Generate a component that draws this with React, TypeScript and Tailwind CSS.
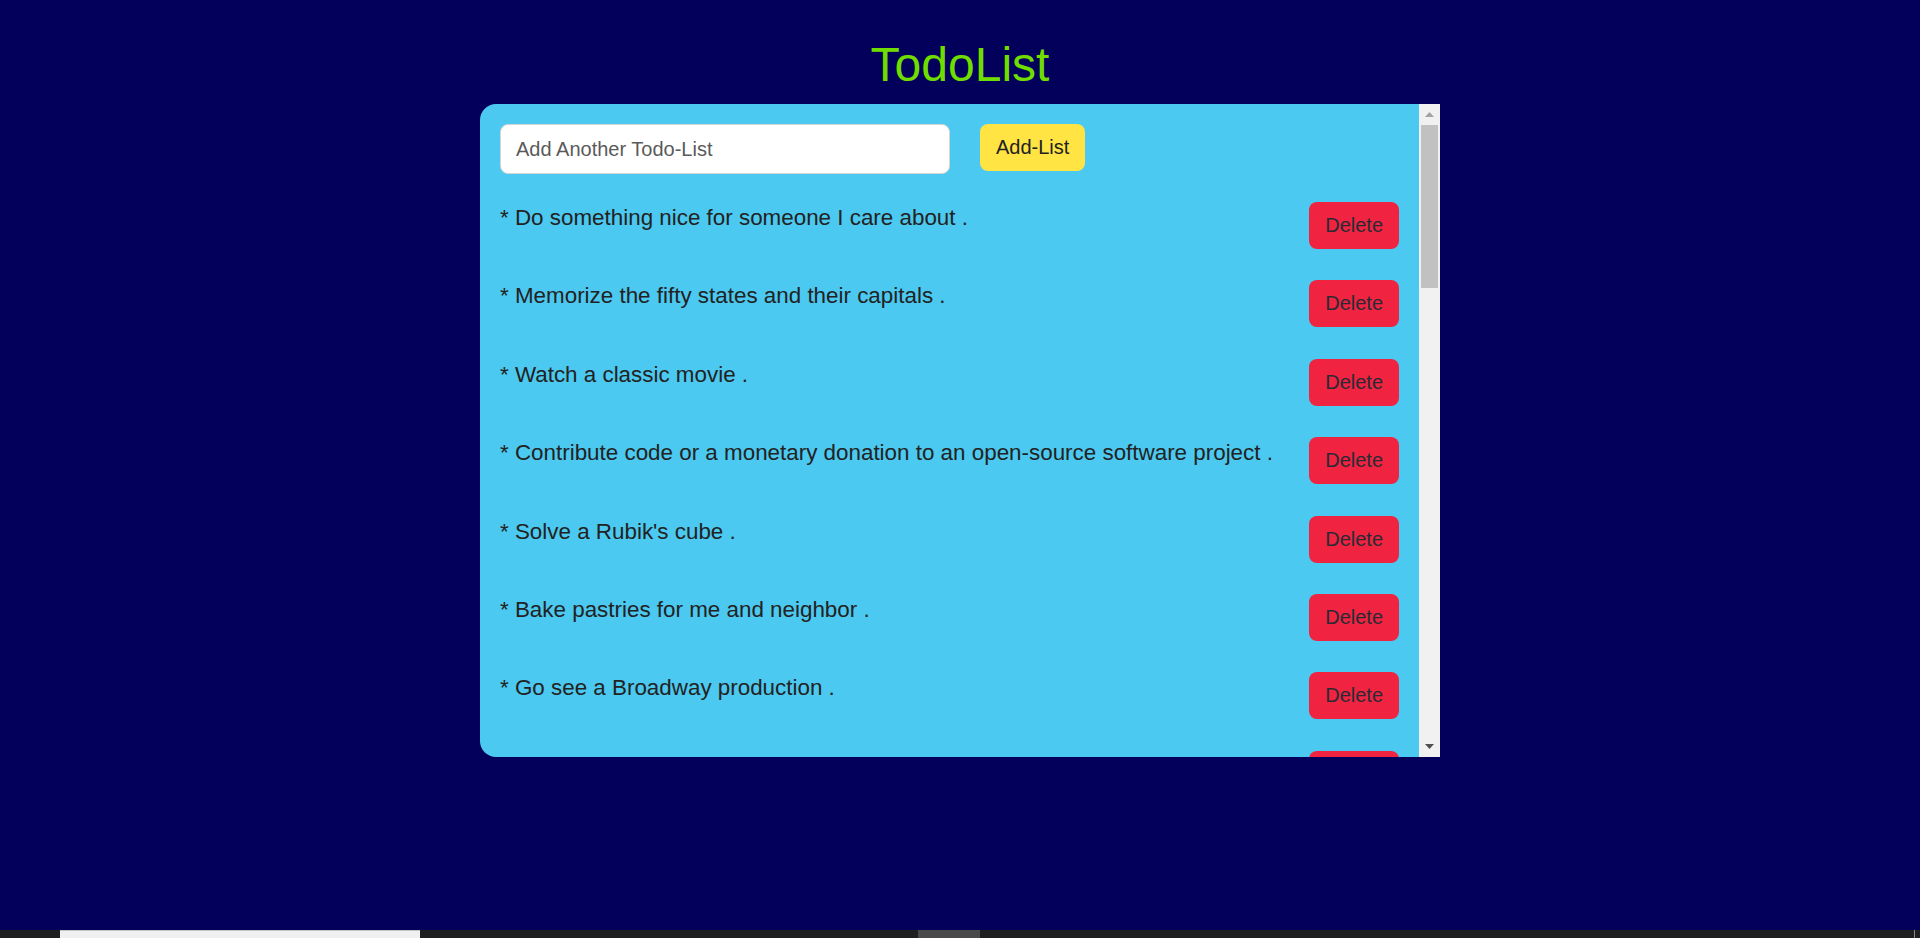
import React from "react";

const todos = [
  "* Do something nice for someone I care about .",
  "* Memorize the fifty states and their capitals .",
  "* Watch a classic movie .",
  "* Contribute code or a monetary donation to an open-source software project .",
  "* Solve a Rubik's cube .",
  "* Bake pastries for me and neighbor .",
  "* Go see a Broadway production .",
];

export default function App() {
  return (
    <div
      className="h-[938px] w-full flex flex-col bg-[#03005c] overflow-hidden"
      style={{ fontFamily: '"Liberation Sans", Arial, sans-serif' }}
    >
      <main className="flex-1 flex flex-col items-center pt-[37px]">
        <h1 className="text-[48px] leading-[55px] text-[#70dd00] font-normal">TodoList</h1>
        <div className="mt-[12px] w-[960px] h-[653px] flex bg-[#4bc9f0] rounded-l-[16px] overflow-hidden">
          <div className="flex-1 min-w-0 overflow-hidden pt-[20px] pl-[20px] pr-[20px]">
            <div className="flex items-start gap-[30px]">
              <input
                type="text"
                placeholder="Add Another Todo-List"
                className="w-[450px] h-[50px] bg-white rounded-[8px] border border-[#d4d4d4] px-[15px] text-[20px] text-[#222] placeholder:text-[#5a5a5a] outline-none"
              />
              <button className="h-[47px] px-4 rounded-[8px] bg-[#ffe444] text-[20px] leading-[23px] text-[#222]">
                Add-List
              </button>
            </div>
            <ul className="mt-[28px] flex flex-col">
              {todos.map((t, i) => (
                <li key={i} className="flex items-start justify-between h-[78.4px] shrink-0">
                  <span className="pt-[3px] text-[22.4px] leading-[26px] text-[#222]">{t}</span>
                  <button className="h-[47px] px-4 rounded-[8px] bg-[#f02440] text-[20px] leading-[23px] text-[#2a2a36] shrink-0">
                    Delete
                  </button>
                </li>
              ))}
              <li className="flex justify-end h-[47px] shrink-0">
                <div className="w-[90px] h-[47px] rounded-[8px] bg-[#f02440]" aria-hidden="true" />
              </li>
            </ul>
          </div>
          <div className="w-[21px] shrink-0 flex flex-col bg-[#f1f1f1]">
            <div className="h-[21px] flex items-center justify-center">
              <svg width="9" height="5" viewBox="0 0 9 5">
                <polygon points="0,5 9,5 4.5,0" fill="#a3a3a3" />
              </svg>
            </div>
            <div className="mx-[2px] h-[163px] bg-[#c1c1c1]" />
            <div className="flex-1" />
            <div className="h-[21px] flex items-center justify-center">
              <svg width="9" height="5" viewBox="0 0 9 5">
                <polygon points="0,0 9,0 4.5,5" fill="#505050" />
              </svg>
            </div>
          </div>
        </div>
      </main>
      <div className="h-[8px] flex bg-[#1f1f1f]">
        <div className="w-[60px]" />
        <div className="w-[360px] bg-[#f0f0f0] border-t border-[#c4c4c4]" />
        <div className="w-[498px]" />
        <div className="w-[62px] bg-[#4a4a4a]" />
        <div className="flex-1" />
        <div className="w-px bg-[#8a8a8a] mr-[5px]" />
      </div>
    </div>
  );
}
